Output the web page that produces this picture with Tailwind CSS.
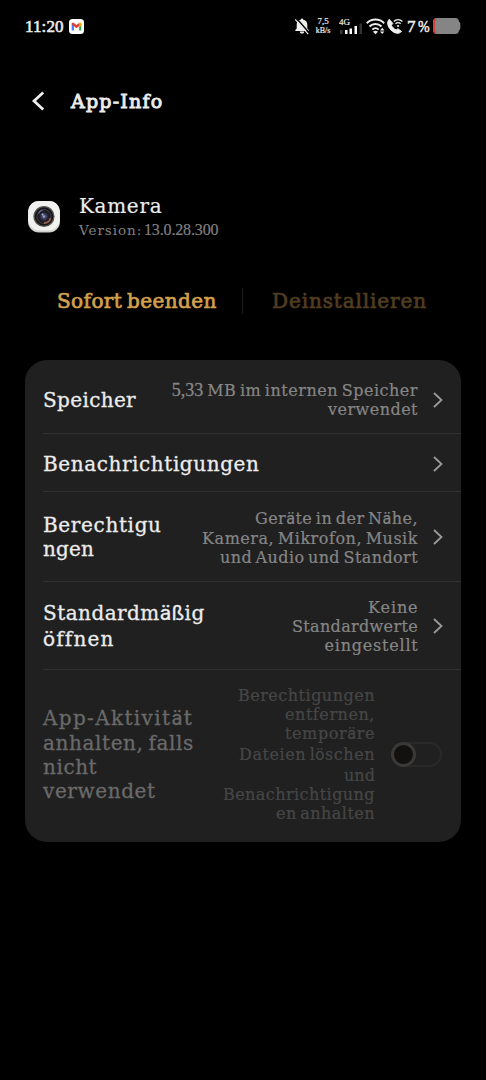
<!DOCTYPE html>
<html lang="de">
<head>
<meta charset="utf-8">
<title>App-Info</title>
<script src="https://cdn.jsdelivr.net/npm/@tailwindcss/browser@4"></script>
</head>
<body class="bg-black">
<div class="flex h-[1080px] w-[486px] flex-col overflow-hidden bg-black font-['DejaVu_Serif','Liberation_Serif',serif] whitespace-nowrap text-[#ececec]">

  <!-- Status bar -->
  <header class="flex h-[52px] shrink-0 items-center pl-[25px] font-['Liberation_Serif',serif]">
    <span class="w-[44px] text-[17px] leading-none tracking-[0.1px] [-webkit-text-stroke:0.6px]">11:20</span>
    <svg class="size-[15px]" viewBox="0 0 15 15"><rect width="15" height="15" rx="3.5" fill="#fff"/><path d="M2.7 4.5v7h2.2V6z" fill="#3f7fe8"/><path d="M12.3 4.5v7h-2.2V6z" fill="#34a853"/><path d="M12.3 4.4v2.2l-2.2 1.6V5z" fill="#fbbc04"/><path d="M2.7 5.2c0-1.3 1.3-1.8 2.2-1.1l2.6 2 2.6-2c.9-.7 2.2-.2 2.2 1.1L7.5 9.2z" fill="#e23b30"/><path d="M12.3 5.2c0-1.3-1.2-1.8-2.2-1.1V7l2.2-1.6z" fill="#fbbc04"/></svg>
    <svg class="ml-[211px] h-[17px] w-[14px]" viewBox="0 0 14 17"><path d="M6 1.6c0-1.4 2-1.4 2 0 2.8.6 4.300 2.600 4.300 5v3.800l1.400 1.600v1H.3v-1l1.400-1.600V6.600c0-2.400 1.500-4.400 4.300-5z" fill="#eee"/><path d="M4.800 13.500h4.400c-.2 3-4.200 3-4.400 0z" fill="#eee"/><path d="M1.200 0l13 14.800" stroke="#000" stroke-width="1.500"/><path d="M.2 1.300l13 14.800" stroke="#eee" stroke-width="1.200"/></svg>
    <div class="ml-[6px] flex w-[16px] flex-col items-center text-[8px] leading-[9px] [-webkit-text-stroke:0.2px]"><span class="text-[9px]">7,5</span><span>kB/s</span></div>
    <svg class="ml-[8px] h-[17px] w-[24px]" viewBox="0 0 24 17"><text x="0" y="7" font-size="9" fill="#eee" stroke="#eee" stroke-width=".2" font-family="Liberation Serif">4G</text><g fill="#fff"><rect x="1" y="12" width="2.500" height="4" fill="#3a3a3a"/><rect x="6" y="12" width="2.500" height="4"/><rect x="10.500" y="10.500" width="2.500" height="5.500"/><rect x="15.500" y="8" width="2.500" height="8"/><rect x="20.500" y="5.500" width="2.500" height="10.500" fill="#333"/></g></svg>
    <svg class="ml-[3px] h-[17px] w-[19px]" viewBox="0 0 19 17" fill="none" stroke="#eee" stroke-width="2"><path d="M.8 5.200a12.300 12.300 0 0 1 17.400 0M3.500 8.500a8.500 8.500 0 0 1 12 0M6.300 11.600a4.600 4.600 0 0 1 6.400 0"/><path d="M9.500 16.300l-2.500-2.600q2.500-2 5 0z" fill="#eee" stroke="none"/><path d="M16.200 9.800l2.200 2.600h-4.400zM16.200 16l2.200-2.600h-4.400z" fill="#eee" stroke="none"/></svg>
    <svg class="ml-[2px] h-[16px] w-[16px]" viewBox="0 0 16 16" fill="none" stroke="#eee"><path d="M2.300 1.300C-.5 4 .5 8.500 4 12s7.500 4.500 10.500 1.500l-3.500-2.800-2 1.300C7 11 5 9 4.400 7.300l1.400-1.900z" fill="#eee" stroke-width="1" stroke-linejoin="round"/><path d="M6.800 3.500a6 6 0 0 1 8.600 0M8.500 5.800a3.700 3.700 0 0 1 5.200 0" stroke-width="1.300"/><circle cx="11.100" cy="8" r="1.100" fill="#eee" stroke="none"/></svg>
    <span class="ml-[4px] w-[26px] text-[17px] leading-none tracking-[-0.5px] [-webkit-text-stroke:0.5px]">7<span class="inline-block w-[3px]"></span><span class="inline-block origin-left scale-x-[0.82]">%</span></span>
    <svg class="h-[16px] w-[28px]" viewBox="0 0 28 16"><path d="M4 0h18.500q3 0 3.500 3.500l1.300 1.500v6l-1.300 1.500q-.5 3.500-3.500 3.500H4q-4 0-4-4V4q0-4 4-4z" fill="#858585"/><path d="M3 .1Q0 .7 0 4v8q0 3.300 3 3.900V14Q2 13 2 11V5q0-2 1-3z" fill="#d8403a"/></svg>
  </header>

  <!-- Title bar -->
  <div class="flex h-[98px] shrink-0 items-center pl-[32px]">
    <svg class="h-[20px] w-[13px]" viewBox="0 0 13 20"><path d="M11.200 1.500L2 10l9.200 8.500" fill="none" stroke="#eee" stroke-width="2.800"/></svg>
    <h1 class="ml-[26px] text-[19px] leading-[26px] tracking-[1.2px] [-webkit-text-stroke:0.9px]">App-Info</h1>
  </div>

  <!-- App identity -->
  <div class="mt-[43px] flex h-[50px] shrink-0 pl-[28px]">
    <svg class="mt-[8px] size-[32px]" viewBox="0 0 32 32"><defs><radialGradient id="lens"><stop offset="0" stop-color="#b9c0e0"/><stop offset=".25" stop-color="#4a4c74"/><stop offset=".6" stop-color="#22202c"/><stop offset="1" stop-color="#17161a"/></radialGradient></defs><rect width="32" height="31.500" rx="11" fill="#d0d0ce"/><rect x=".3" width="31.400" height="29.500" rx="10.500" fill="#f1f1ef"/><circle cx="16" cy="15.500" r="10.600" fill="#5a5754"/><circle cx="16" cy="15.500" r="9.300" fill="#17161a"/><circle cx="16" cy="15.500" r="7" fill="url(#lens)" stroke="#4b4650" stroke-width=".8"/><path d="M16 22a6.500 6.500 0 0 0 6.500-5" fill="none" stroke="#8f5f4c" stroke-width="1.800"/><path d="M10.500 12.500a6 6 0 0 1 4-3.300" fill="none" stroke="#626c9c" stroke-width="1.200"/><circle cx="14.500" cy="13.500" r=".9" fill="#b9c0e0"/></svg>
    <div class="ml-[19px]">
      <div class="text-[20px] leading-[26px] tracking-[0.68px] [-webkit-text-stroke:0.2px]">Kamera</div>
      <div class="mt-px flex leading-[20px] text-[#808080]"><span class="w-[65px] text-[13.500px] tracking-[0.95px]">Version:</span><span class="text-[16px] tracking-[-0.15px] font-['Liberation_Serif',serif] [-webkit-text-stroke:0.2px]">13.0.28.300</span></div>
    </div>
  </div>

  <!-- Actions -->
  <div class="mt-[44px] flex h-[28px] shrink-0 items-center text-[20px] leading-[28px]">
    <span class="w-[186px] pl-[57px] tracking-[0.42px] [word-spacing:-2px] text-[#d3a04c] [-webkit-text-stroke:0.7px]">Sofort beenden</span>
    <span class="ml-[56px] h-[26px] w-px bg-[#1a1a1a]"></span>
    <span class="ml-[29px] tracking-[0.88px] text-[#513d20] [-webkit-text-stroke:0.7px]">Deinstallieren</span>
  </div>

  <!-- Settings card -->
  <main class="mt-[45px] ml-[25px] flex h-[482px] w-[436px] shrink-0 flex-col rounded-[22px] bg-[#202020] pl-[18px] text-[20px]">
    <section class="flex h-[74px] items-center border-b border-[#303030] pt-[7px] pr-[18px]">
      <span class="flex-1 leading-[26px] tracking-[0.35px] [-webkit-text-stroke:0.3px]">Speicher</span>
      <div class="text-right text-[16px] leading-[19px] text-[#868686] [-webkit-text-stroke:0.2px]">
        <div class="flex gap-[4px] tracking-[0.52px] [word-spacing:-2px]"><span class="text-[18px] tracking-[0px] font-['Liberation_Serif',serif] [-webkit-text-stroke:0.3px]">5,33</span>MB im internen Speicher</div>
        <div class="tracking-[0.47px]">verwendet</div>
      </div>
      <svg class="ml-[15px] h-[16px] w-[10px]" viewBox="0 0 10 16"><path d="M1 1l7.500 7L1 15" fill="none" stroke="#9a9a9a" stroke-width="1.800"/></svg>
    </section>
    <section class="flex h-[58px] items-center border-b border-[#303030] pt-[2px] pr-[18px]">
      <span class="flex-1 leading-[26px] tracking-[0.58px] [-webkit-text-stroke:0.3px]">Benachrichtigungen</span>
      <svg class="h-[16px] w-[10px]" viewBox="0 0 10 16"><path d="M1 1l7.500 7L1 15" fill="none" stroke="#9a9a9a" stroke-width="1.800"/></svg>
    </section>
    <section class="flex h-[90px] items-center border-b border-[#303030] pt-[1px] pr-[18px]">
      <div class="flex-1 leading-[24px] [-webkit-text-stroke:0.3px]">
        <div class="tracking-[0.65px]">Berechtigu</div>
        <div class="tracking-[0.2px]">ngen</div>
      </div>
      <div class="text-right text-[16px] text-[#868686] [word-spacing:-2px] [-webkit-text-stroke:0.2px]">
        <div class="leading-[21px] tracking-[0.47px]">Ger<span class="font-['Roboto']">ä</span>te in der N<span class="font-['Roboto']">ä</span>he,</div>
        <div class="leading-[20px] tracking-[0.53px]">Kamera, Mikrofon, Musik</div>
        <div class="leading-[18px] tracking-[0.41px]">und Audio und Standort</div>
      </div>
      <svg class="ml-[15px] h-[16px] w-[10px]" viewBox="0 0 10 16"><path d="M1 1l7.500 7L1 15" fill="none" stroke="#9a9a9a" stroke-width="1.800"/></svg>
    </section>
    <section class="flex h-[88px] items-center border-b border-[#303030] pt-[1px] pr-[18px]">
      <div class="flex-1 leading-[26px] [-webkit-text-stroke:0.3px]">
        <div class="tracking-[0.46px]">Standardm<span class="font-['Roboto'] text-[21px] leading-none">äß</span>ig</div>
        <div class="tracking-[1.200px]"><span class="font-['Roboto'] text-[21px] leading-none">ö</span>ffnen</div>
      </div>
      <div class="text-right text-[16px] leading-[19px] text-[#868686] [-webkit-text-stroke:0.2px]">
        <div class="-mr-[0.500px] tracking-[0.9px]">Keine</div>
        <div class="tracking-[0.34px]">Standardwerte</div>
        <div class="-mr-[0.500px] tracking-[0.78px]">eingestellt</div>
      </div>
      <svg class="ml-[15px] h-[16px] w-[10px]" viewBox="0 0 10 16"><path d="M1 1l7.500 7L1 15" fill="none" stroke="#9a9a9a" stroke-width="1.800"/></svg>
    </section>
    <section class="flex flex-1 items-center pr-[19px] pb-[4px]">
      <div class="flex-1 leading-[24px] text-[#6a6a6a] [-webkit-text-stroke:0.3px]">
        <div class="leading-[26px] tracking-[1.350px]">App-Aktivit<span class="font-['Roboto']">ä</span>t</div>
        <div class="tracking-[0.6px] [word-spacing:-2px]">anhalten, falls</div>
        <div class="tracking-[0.56px]">nicht</div>
        <div class="tracking-[0.6px]">verwendet</div>
      </div>
      <div class="text-right text-[16px] leading-[19px] text-[#474747] [-webkit-text-stroke:0.2px]">
        <div class="tracking-[0.5px]">Berechtigungen</div>
        <div class="tracking-[0.56px]">entfernen,</div>
        <div class="leading-[20px] tracking-[0.62px]">tempor<span class="font-['Roboto']">ä</span>re</div>
        <div class="leading-[22px] tracking-[0.55px] [word-spacing:-2px]">Dateien l<span class="font-['Roboto']">ö</span>schen</div>
        <div class="tracking-[0.05px]">und</div>
        <div class="tracking-[0.44px]">Benachrichtigung</div>
        <div class="tracking-[0.46px] [word-spacing:-2px]">en anhalten</div>
      </div>
      <div class="ml-[16px] flex h-[25px] w-[51px] items-center rounded-full border-2 border-[#292929]">
        <span class="-ml-[2px] size-[25px] shrink-0 rounded-full border-[3.500px] border-[#3a3938] bg-[#121110]"></span>
      </div>
    </section>
  </main>
</div>
</body>
</html>
